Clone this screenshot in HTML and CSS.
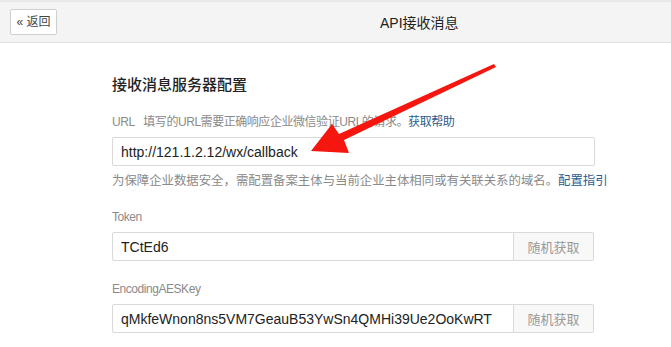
FILE: index.html
```html
<!DOCTYPE html>
<html lang="zh-CN">
<head>
    <meta charset="UTF-8">
    <meta name="viewport" content="width=device-width, initial-scale=1.0">
    <title>API接收消息</title>
    <link rel="stylesheet" href="styles.css">
</head>
<body>
    <div class="top-bar">
        <a class="back-btn" href="#">&laquo; 返回</a>
        <div class="page-title">API接收消息</div>
    </div>

    <div class="content">
        <h2 class="section-title">接收消息服务器配置</h2>

        <div class="field">
            <div class="label">URL&nbsp;&nbsp;&nbsp;填写的URL需要正确响应企业微信验证URL的请求。<a class="link" href="#">获取帮助</a></div>
            <input type="text" class="text-input" value="http://121.1.2.12/wx/callback">
            <div class="tip">为保障企业数据安全，需配置备案主体与当前企业主体相同或有关联关系的域名。<a class="link" href="#">配置指引</a></div>
        </div>

        <div class="field">
            <div class="label">Token</div>
            <div class="input-group">
                <input type="text" class="text-input" value="TCtEd6">
                <button class="rand-btn">随机获取</button>
            </div>
        </div>

        <div class="field">
            <div class="label">EncodingAESKey</div>
            <div class="input-group">
                <input type="text" class="text-input" value="qMkfeWnon8ns5VM7GeauB53YwSn4QMHi39Ue2OoKwRT">
                <button class="rand-btn">随机获取</button>
            </div>
        </div>
    </div>

    <!-- 标注箭头 -->
    <svg class="arrow" width="671" height="347" viewBox="0 0 671 347">
        <polygon fill="#f5160f" points="494,64 496,67 344,140 349,153 311,151 332,124 339,134"/>
    </svg>
</body>
</html>
```

FILE: styles.css
```css
body {
    margin: 0;
    font-family: "Liberation Sans", "Noto Sans CJK SC", sans-serif;
    background: #fff;
    color: #222;
}
.top-bar {
    display: flex;
    align-items: center;
    height: 40px;
    border-top: 2px solid #e9e9e9;
    border-bottom: 1px solid #e1e1e1;
    background: #f4f4f4;
    padding-left: 10px;
}
.back-btn {
    display: inline-block;
    box-sizing: border-box;
    width: 47px;
    height: 26px;
    line-height: 24px;
    border: 1px solid #cfcfcf;
    border-radius: 2px;
    background: #fff;
    color: #444;
    font-size: 12px;
    text-align: center;
    text-decoration: none;
}
.page-title {
    margin-left: 323px;
    font-size: 14px;
    color: #222;
}
.content {
    padding: 32px 0 0 112px;
}
.section-title {
    margin: 0 0 19px;
    font-size: 15px;
    line-height: 20px;
    font-weight: 500;
    color: #222;
}
.field { margin-bottom: 20px; }
.label, .tip {
    font-size: 12px;
    line-height: 16px;
    color: #8a8a8a;
}
.label {
    margin-bottom: 7px;
    letter-spacing: -0.45px;
}
.tip {
    margin-top: 7px;
    font-size: 12.4px;
}
.link {
    color: #2b5c8f;
    text-decoration: none;
}
.text-input {
    display: block;
    box-sizing: border-box;
    width: 483px;
    height: 29px;
    padding: 0 8px;
    border: 1px solid #d9d9d9;
    border-radius: 2px;
    font-family: inherit;
    font-size: 14px;
    color: #222;
    outline: none;
}
.input-group {
    display: flex;
    width: 482px;
}
.input-group .text-input {
    flex: 1;
    width: auto;
    border-radius: 2px 0 0 2px;
}
.rand-btn {
    width: 80px;
    height: 29px;
    border: 1px solid #d9d9d9;
    border-left: none;
    border-radius: 0 2px 2px 0;
    background: #f8f8f8;
    color: #9a9a9a;
    font-family: inherit;
    font-size: 13px;
    padding: 0;
}
.arrow {
    position: absolute;
    left: 0;
    top: 0;
    pointer-events: none;
}
```
